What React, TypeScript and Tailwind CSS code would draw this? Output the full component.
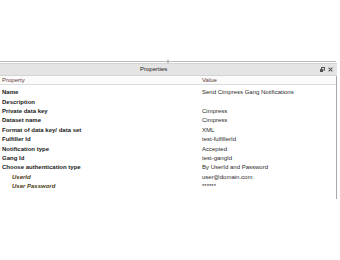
import React from 'react';

interface Row {
  label: string;
  value: string;
  child?: boolean;
}

const rows: Row[] = [
  { label: 'Name', value: 'Send Cimpress Gang Notifications' },
  { label: 'Description', value: '' },
  { label: 'Private data key', value: 'Cimpress' },
  { label: 'Dataset name', value: 'Cimpress' },
  { label: 'Format of data key/ data set', value: 'XML' },
  { label: 'Fulfiller Id', value: 'test-fulfillerId' },
  { label: 'Notification type', value: 'Accepted' },
  { label: 'Gang Id', value: 'test-gangId' },
  { label: 'Choose authentication type', value: 'By UserId and Password' },
  { label: 'UserId', value: 'user@domain.com', child: true },
  { label: 'User Password', value: '******', child: true },
];

const FloatIcon = () => (
  <svg width="5" height="5" viewBox="0 0 5 5" className="block">
    <rect x="1.5" y="0.5" width="3" height="2.5" fill="none" stroke="#555" strokeWidth="1" />
    <rect x="0" y="2" width="3" height="3" fill="#555" />
  </svg>
);

const CloseIcon = () => (
  <svg width="5" height="5" viewBox="0 0 5 5" className="block">
    <path d="M0.6 0.6 L4.4 4.4 M4.4 0.6 L0.6 4.4" stroke="#555" strokeWidth="1.1" />
  </svg>
);

const App: React.FC = () => {
  return (
    <div className="w-[340px] h-[260px] bg-white overflow-hidden font-['Liberation_Sans',Arial,sans-serif] text-[6px] text-[#1e1e1e]">
      <div className="h-[61px]"></div>
      <div className="relative w-[336px] h-px bg-[#b8b8b8]">
        <div className="absolute left-[167px] -top-px w-[2px] h-[3px] bg-white border-x border-[#b8b8b8]"></div>
      </div>
      <div className="h-[1px]"></div>
      <div className="w-[337px] flex flex-col">
        <div className="h-[13px] flex items-center bg-[#e4e4e4] border-y border-[#d4d4d4]">
          <span className="pl-[140px] flex-1 text-[#222]">Properties</span>
          <div className="flex items-center gap-[3px] pr-[4px]">
            <FloatIcon />
            <CloseIcon />
          </div>
        </div>
        <div className="flex flex-col border-r border-[#a8a8a8]">
          <div className="h-[9px] flex items-center bg-[#fbfbfb] border-b border-[#dcdcdc] text-[#603a36]">
            <span className="w-[202px] pl-[2px]">Property</span>
            <span>Value</span>
          </div>
          <div className="flex flex-col pt-[3px] pb-[8px]">
            {rows.map((r) => (
              <div key={r.label} className="h-[9.4px] flex items-center">
                {r.child ? (
                  <span className="w-[202px] pl-[12px] font-bold italic text-[#4a3a12]">{r.label}</span>
                ) : (
                  <span className="w-[202px] pl-[2px] font-bold text-[#1a1a1a]">{r.label}</span>
                )}
                <span className="text-[#2a2a2a]">{r.value}</span>
              </div>
            ))}
          </div>
        </div>
      </div>
    </div>
  );
};

export default App;
